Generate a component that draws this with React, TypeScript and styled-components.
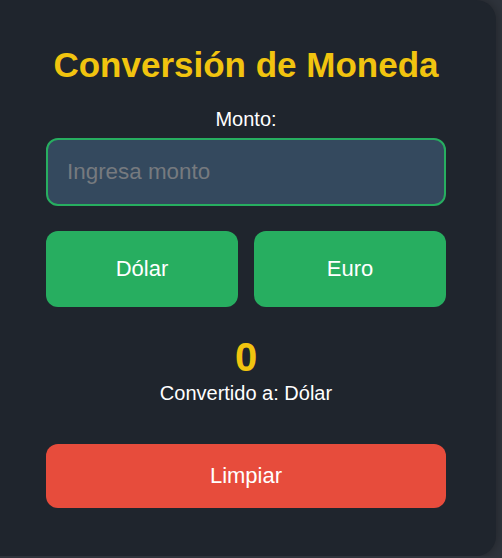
import React, { useState } from 'react';
import styled, { createGlobalStyle } from 'styled-components';

const GlobalStyle = createGlobalStyle`
  html, body {
    margin: 0;
    padding: 0;
    background: #2f343c;
    font-family: "Liberation Sans", Arial, sans-serif;
    overflow: hidden;
  }
`;

const Card = styled.div`
  box-sizing: border-box;
  width: 496px;
  height: 556px;
  padding: 45px 50px 0 46px;
  background: #1f252d;
  border-radius: 0 20px 20px 0;
  box-shadow: 0 0 12px rgba(0, 0, 0, 0.35);
  display: flex;
  flex-direction: column;
  align-items: stretch;
  color: #ffffff;
`;

const Title = styled.h1`
  margin: 0 0 23px;
  font-size: 35px;
  font-weight: 700;
  color: #f1c40f;
  text-align: center;
  white-space: nowrap;
`;

const Label = styled.label`
  display: block;
  font-size: 20px;
  text-align: center;
  margin-bottom: 7px;
`;

const AmountInput = styled.input`
  box-sizing: border-box;
  width: 100%;
  padding: 19px 19px;
  font-family: inherit;
  font-size: 22.4px;
  color: #ffffff;
  background: #34495e;
  border: 2px solid #27ae60;
  border-radius: 12px;
  outline: none;

  &::placeholder {
    color: #767a7f;
  }
`;

const CurrencyRow = styled.div`
  display: grid;
  grid-template-columns: 1fr 1fr;
  gap: 16px;
  margin-top: 25px;
`;

const Button = styled.button<{ $tone: 'green' | 'red'; $pad: number }>`
  box-sizing: border-box;
  width: 100%;
  padding: ${(p) => p.$pad}px 10px;
  font-family: inherit;
  font-size: 22px;
  color: #ffffff;
  background: ${(p) => (p.$tone === 'green' ? '#27ae60' : '#e74c3c')};
  border: none;
  border-radius: 12px;
  cursor: pointer;
`;

const Result = styled.div`
  margin-top: 28px;
  font-size: 40px;
  font-weight: 700;
  color: #f1c40f;
  text-align: center;
`;

const Caption = styled.div`
  font-size: 20px;
  text-align: center;
  margin-top: 2px;
`;

const ClearRow = styled.div`
  margin-top: 39px;
`;

export default function App(): JSX.Element {
  const [amount, setAmount] = useState('');
  const [currency, setCurrency] = useState('Dólar');
  const rates: Record<string, number> = { 'Dólar': 0.05, Euro: 0.046 };
  const value = amount ? +(parseFloat(amount) * rates[currency]).toFixed(2) : 0;

  return (
    <>
      <GlobalStyle />
      <Card>
        <Title>Conversión de Moneda</Title>
        <Label htmlFor="monto">Monto:</Label>
        <AmountInput
          id="monto"
          type="number"
          placeholder="Ingresa monto"
          value={amount}
          onChange={(e) => setAmount(e.target.value)}
        />
        <CurrencyRow>
          <Button $tone="green" $pad={25} onClick={() => setCurrency('Dólar')}>
            Dólar
          </Button>
          <Button $tone="green" $pad={25} onClick={() => setCurrency('Euro')}>
            Euro
          </Button>
        </CurrencyRow>
        <Result>{value}</Result>
        <Caption>Convertido a: {currency}</Caption>
        <ClearRow>
          <Button $tone="red" $pad={19} onClick={() => setAmount('')}>
            Limpiar
          </Button>
        </ClearRow>
      </Card>
    </>
  );
}
